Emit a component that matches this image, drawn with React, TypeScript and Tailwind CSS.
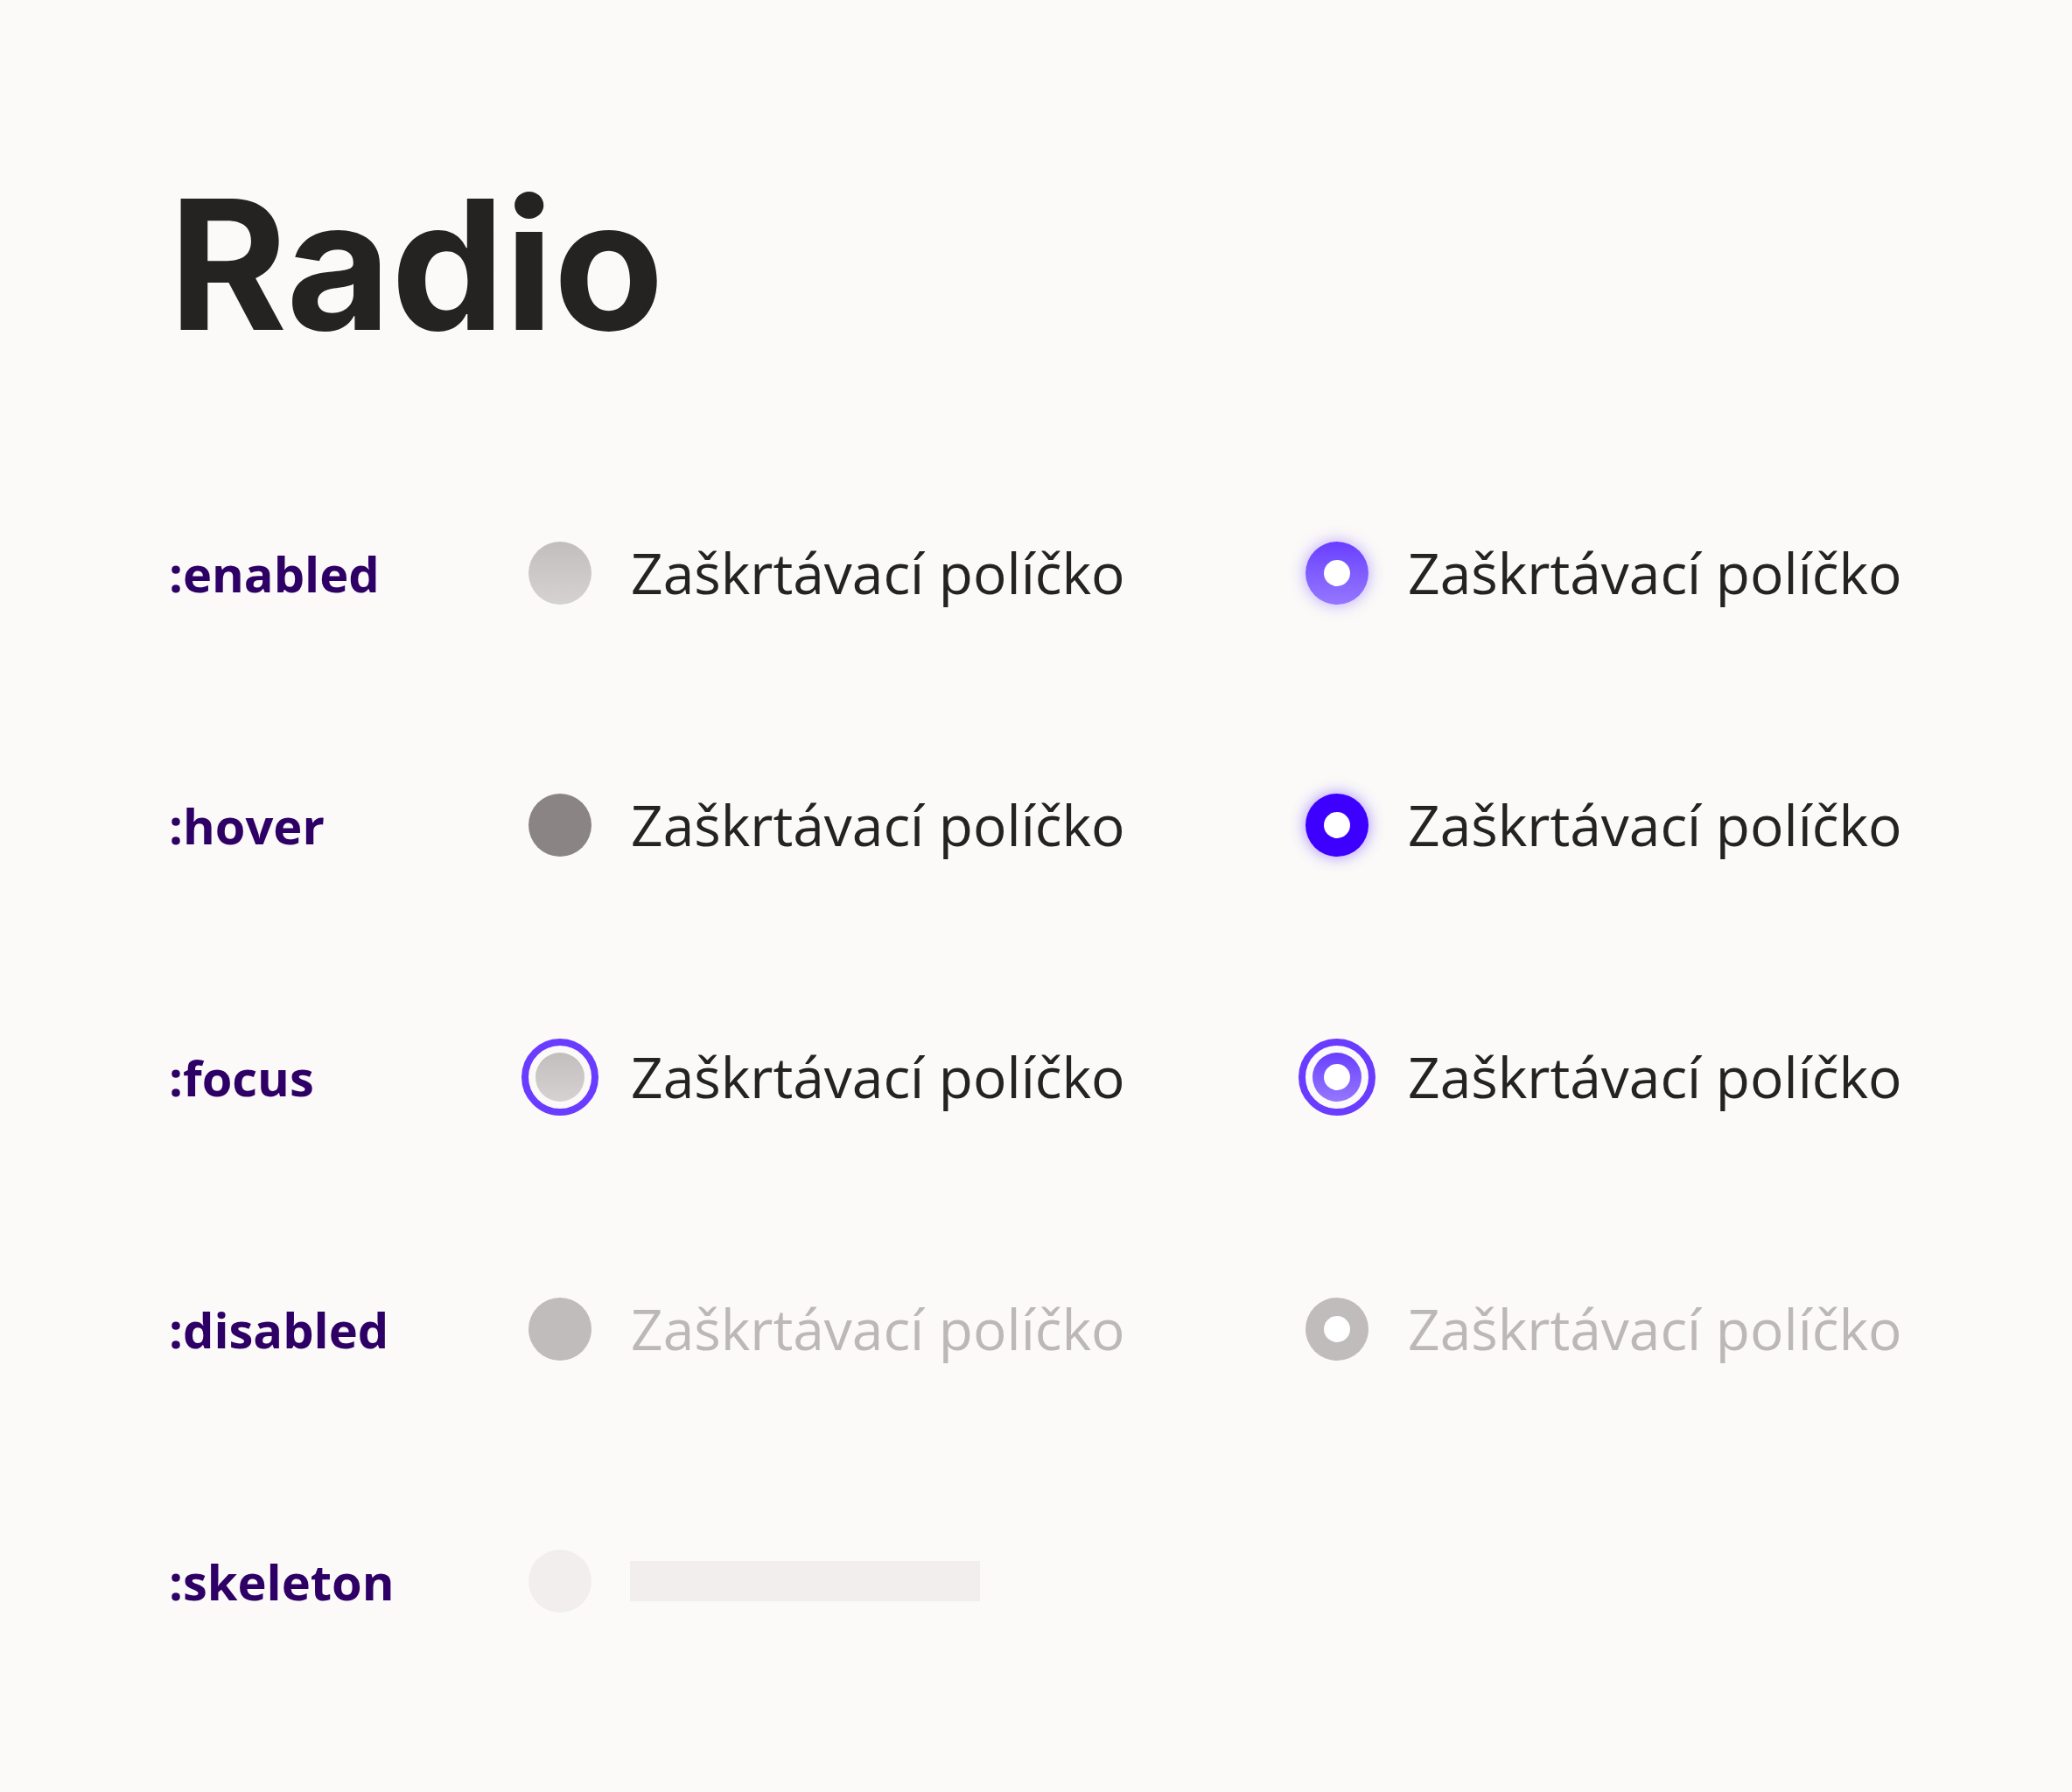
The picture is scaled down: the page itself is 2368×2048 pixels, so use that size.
import React from 'react';

type Kind = 'enabled' | 'hover' | 'focus' | 'disabled';

const RadioDot: React.FC<{ kind: Kind; checked: boolean }> = ({ kind, checked }) => {
  if (kind === 'focus') {
    return (
      <div className="w-[88px] h-[88px] -m-[8px] rounded-full border-[8px] border-[#6a3cff] bg-[#fbfaf8] flex items-center justify-center shrink-0">
        {checked ? (
          <div className="w-[56px] h-[56px] rounded-full bg-linear-to-b from-[#6a3cff] to-[#9676ff] flex items-center justify-center">
            <div className="w-[30px] h-[30px] rounded-full bg-white" />
          </div>
        ) : (
          <div className="w-[56px] h-[56px] rounded-full bg-linear-to-b from-[#c2bebe] to-[#d5d2d1]" />
        )}
      </div>
    );
  }

  const base = 'w-[72px] h-[72px] rounded-full flex items-center justify-center shrink-0';
  let fill = '';
  if (kind === 'enabled') {
    fill = checked
      ? 'bg-linear-to-b from-[#6a3cff] to-[#9676ff] shadow-[0_0_18px_rgba(106,60,255,0.45)]'
      : 'bg-linear-to-b from-[#c2bebe] to-[#d5d2d1]';
  } else if (kind === 'hover') {
    fill = checked ? 'bg-[#3d00ff] shadow-[0_0_18px_rgba(61,0,255,0.45)]' : 'bg-[#8a8484]';
  } else {
    fill = 'bg-[#c1bcbc]';
  }

  return (
    <div className={`${base} ${fill}`}>
      {checked && <div className="w-[30px] h-[30px] rounded-full bg-white" />}
    </div>
  );
};

const Option: React.FC<{ kind: Kind; checked: boolean }> = ({ kind, checked }) => (
  <div className="flex items-center gap-[45px]">
    <RadioDot kind={kind} checked={checked} />
    <span
      className={`text-[64px] ${kind === 'disabled' ? 'text-[#bdb8b8]' : 'text-[#242322]'}`}
      style={{ fontFamily: '"Open Sans", "Noto Sans", sans-serif' }}
    >
      Zaškrtávací políčko
    </span>
  </div>
);

const Label: React.FC<{ children: React.ReactNode }> = ({ children }) => (
  <div
    className="w-[411px] shrink-0 text-[56px] font-bold text-[#2e0066]"
    style={{ fontFamily: '"Open Sans", "Noto Sans", sans-serif' }}
  >
    {children}
  </div>
);

export default function App() {
  const states: Kind[] = ['enabled', 'hover', 'focus', 'disabled'];

  return (
    <div className="min-h-[2048px] w-full bg-[#fbfaf8] pl-[193px] pt-[199px]">
      <h1
        className="text-[206px] leading-[206px] font-bold text-[#242322]"
        style={{ fontFamily: 'Inter, "Liberation Sans", sans-serif' }}
      >
        Radio
      </h1>

      <div className="mt-[106px] flex flex-col">
        {states.map((s) => (
          <div key={s} className="h-[288px] flex items-center">
            <Label>:{s}</Label>
            <div className="w-[888px] shrink-0">
              <Option kind={s} checked={false} />
            </div>
            <Option kind={s} checked={true} />
          </div>
        ))}

        <div className="h-[288px] flex items-center">
          <Label>:skeleton</Label>
          <div className="flex items-center gap-[44px]">
            <div className="w-[72px] h-[72px] rounded-full bg-[#f1eeed]" />
            <div className="w-[400px] h-[46px] bg-[#f1eeed]" />
          </div>
        </div>
      </div>
    </div>
  );
}
